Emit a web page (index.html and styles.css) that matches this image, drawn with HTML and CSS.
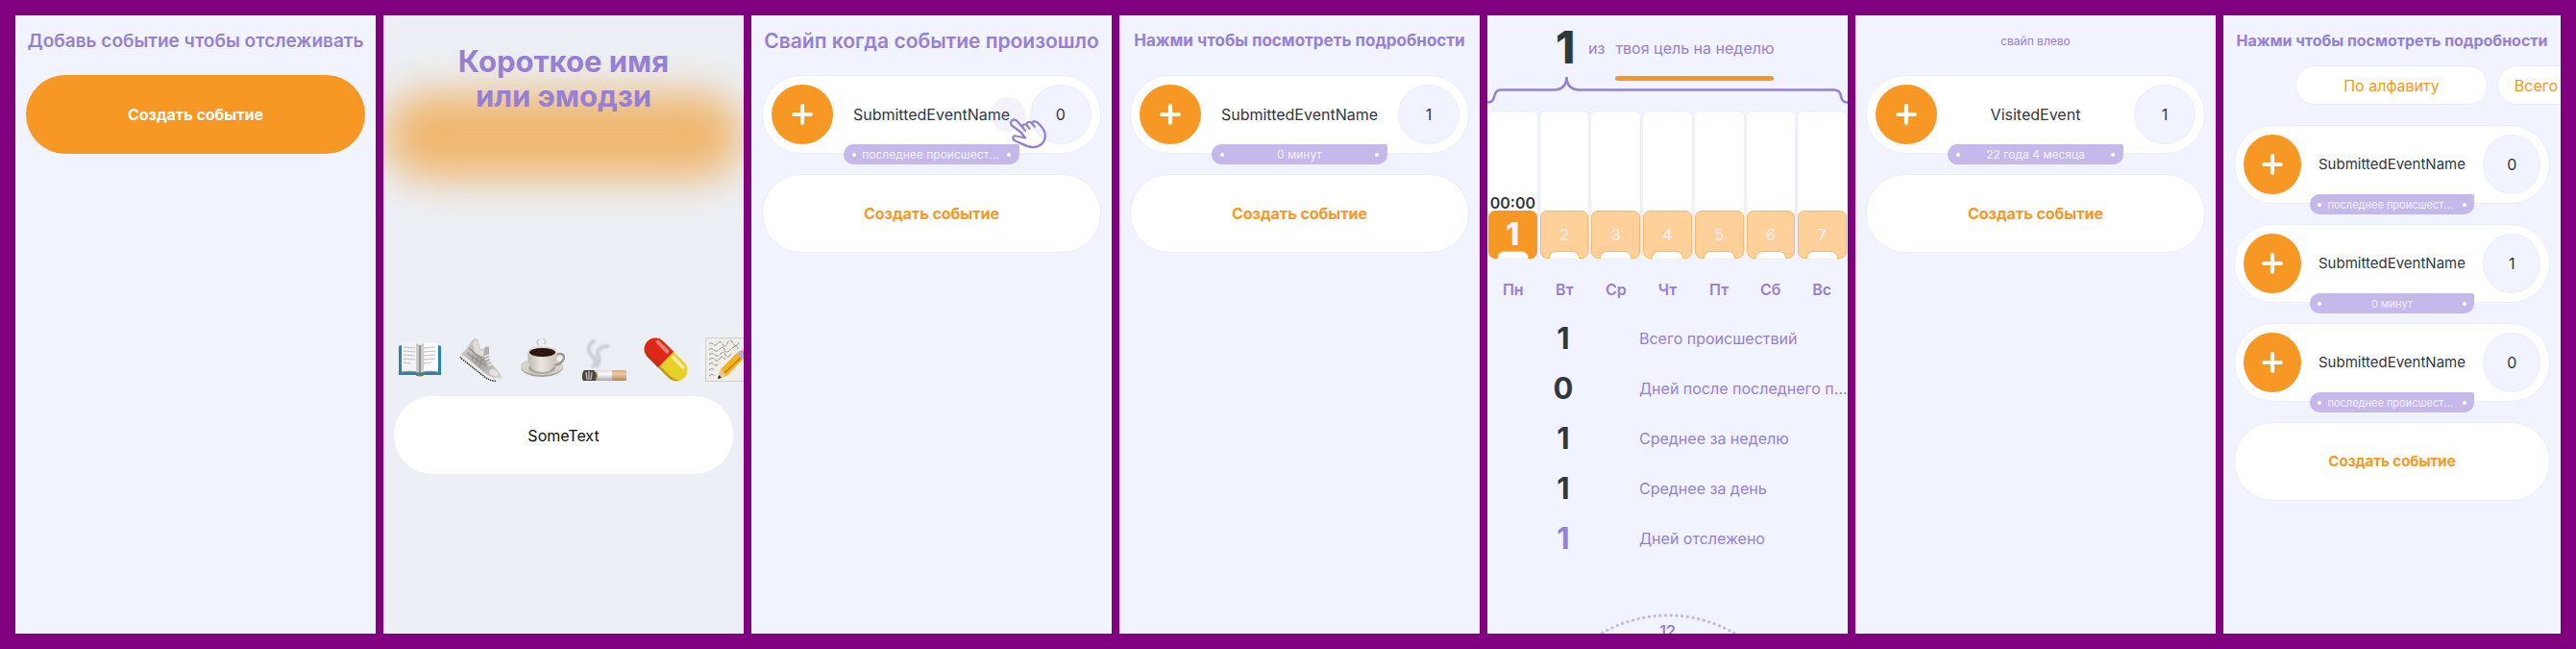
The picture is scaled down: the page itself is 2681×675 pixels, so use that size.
FILE: index.html
```html
<!DOCTYPE html>
<html lang="ru">
<head>
<meta charset="utf-8">
<title>События</title>
<link rel="stylesheet" href="styles.css">
</head>
<body>
<svg class="defs" aria-hidden="true">
  <symbol id="plus" viewBox="0 0 22 22"><path d="M11 2.2V19.8M2.2 11H19.8" fill="none" stroke="#fff" stroke-width="4.2" stroke-linecap="round"/></symbol>
  <linearGradient id="paperRoll" x1="0" y1="0" x2="0" y2="1"><stop offset="0" stop-color="#d8d8dc"/><stop offset=".35" stop-color="#fff"/><stop offset="1" stop-color="#a9a9ad"/></linearGradient>
  <linearGradient id="filterTip" x1="0" y1="0" x2="0" y2="1"><stop offset="0" stop-color="#d9a880"/><stop offset=".35" stop-color="#f0c8a0"/><stop offset="1" stop-color="#b98459"/></linearGradient>
  <linearGradient id="cup" x1="0" y1="0" x2="1" y2="0"><stop offset="0" stop-color="#bdb8ae"/><stop offset=".45" stop-color="#e9e6df"/><stop offset="1" stop-color="#c5c0b6"/></linearGradient>
  <linearGradient id="leather" x1="0" y1="0" x2="1" y2="1"><stop offset="0" stop-color="#d6d4d2"/><stop offset=".55" stop-color="#aaa6a4"/><stop offset="1" stop-color="#dddbd9"/></linearGradient>
  <filter id="smoke"><feGaussianBlur stdDeviation="1.2"/></filter>
</svg>
<main class="board">

  <section class="screen">
    <h2 class="title title-m">Добавь событие чтобы отслеживать</h2>
    <div class="list"><button class="create create-main">Создать событие</button></div>
  </section>

  <section class="screen entry">
    <div class="glow"></div>
    <h2 class="prompt">Короткое имя<br>или эмодзи</h2>
    <div class="emojis">
      <svg class="emoji" viewBox="0 0 46 46" role="img" aria-label="Книга">
        <path d="M1 9l3-1h38l3 1v30H27q-4 3-8 0H1z" fill="#2583ad"/><path d="M18 38h10l-2 2h-6z" fill="#8a7a1c"/>
        <path d="M4 6q12-3 19 2v29q-8-3-19-1z" fill="#f3f3f6"/><path d="M42 6q-12-3-19 2v29q8-3 19-1z" fill="#fafafc"/>
        <path d="M19 6l4 2 4-2v28l-4 3-4-3z" fill="#777" opacity=".35"/><path d="M23 8v29" stroke="#555" stroke-width="1"/>
        <path d="M6 10l12 1M6 14l12 1M6 18l12 1M6 22l12 1M6 26l8 1M27 11l12-1M27 15l12-1M27 19l12-1M27 23l12-1M27 27l8-1" stroke="#b5b5c2" stroke-width="1" stroke-dasharray="3 .6"/>
        <path d="M4 36q12-2 19 1 7-3 19-1" stroke="#8f8f8f" fill="none"/>
      </svg>
      <svg class="emoji" viewBox="0 0 46 46" role="img" aria-label="Кроссовок">
        <path d="M2 17q5-4 8-9 3-6 7-7 3 0 3 4l1 5q3 5 6 0 4-2 4 1v10q1 5 5 9l7 8q3 5-1 7-5 2-12-3L4 22q-3-2-2-5z" fill="url(#leather)"/>
        <path d="M1 17l5 3 22 18q8 6 15 4-2 5-8 3-5-1-9-5L4 23q-4-2-3-6z" fill="#eeedeb"/>
        <path d="M1 20q1 2 4 4l19 15q8 7 14 6" fill="none" stroke="#333" stroke-width="1.500" stroke-dasharray="1.500 .8"/>
        <path d="M14 6q3-5 5-3l2 8q2 4 5 1l-1 8-9-4z" fill="#dfdddb"/><path d="M33 33q5-1 8 6-5 3-10-2z" fill="#e6e4e2"/>
        <path d="M10 11l15 13M8 16l20 14M15 18l-2 6M19 20l-2 7M23 23l-2 7" fill="none" stroke="#908c8a" stroke-width="1.200"/>
        <path d="M26 20l5-2M27 23l5-2M29 26l5-2M30 29l6-2" fill="none" stroke="#f1f0ee" stroke-width="1.400"/>
      </svg>
      <svg class="emoji" viewBox="0 0 46 46" role="img" aria-label="Кофе">
        <ellipse cx="22" cy="31" rx="22" ry="10" fill="#aaa59c"/><ellipse cx="22" cy="30" rx="22" ry="9" fill="#d6d2cb"/><ellipse cx="22" cy="32" rx="14" ry="6" fill="#aca79d"/>
        <path d="M36 18q9-3 9 3-1 7-12 8" fill="none" stroke="#a09b92" stroke-width="2.400"/>
        <path d="M7 15q0 17 9 20 7 2 13 0 9-4 9-20z" fill="url(#cup)"/>
        <ellipse cx="22.500" cy="15" rx="15.500" ry="6" fill="#dedad3"/><ellipse cx="22.500" cy="15.500" rx="13.500" ry="4.600" fill="#2d1710"/>
        <path d="M19 8q-5-4 1-6M24 7q4-3-1-6" fill="none" stroke="#999" stroke-width="1.200" opacity=".55"/>
      </svg>
      <svg class="emoji" viewBox="0 0 46 46" role="img" aria-label="Сигарета">
        <path d="M10 31Q17 26 10 19Q2 10 13 3M14 31Q20 25 16 18Q15 9 28 9" fill="none" stroke="#a9abb0" stroke-width="4" opacity=".5" filter="url(#smoke)"/>
        <rect y="34" width="32" height="11" rx="2" fill="url(#paperRoll)"/><rect x="31" y="34" width="15" height="11" rx="1" fill="url(#filterTip)"/>
        <path d="M2 34h10q6 6 2 11H1q-3-6 1-11z" fill="#4b4540"/><path d="M4 36l1 8M7 35v9M10 36l-1 8" stroke="#bbb5ac" stroke-width="1.500"/>
        <path d="M14 36q3 4 0 8" fill="none" stroke="#b79a66" stroke-width="1.500"/>
      </svg>
      <svg class="emoji" viewBox="0 0 46 46" role="img" aria-label="Таблетка">
        <g transform="rotate(45 23 23)"><rect x="-4" y="11.500" width="54" height="23" rx="11.500" fill="#e7d027"/><path d="M23 11.500H7.500a11.500 11.500 0 0 0 0 23H23z" fill="#dd2819"/>
        <path d="M-2 29q4 3 10 3h30q7-1 10-4-2 6-10 6.500H8q-7-1-10-5.500z" fill="#7c4c0c" opacity=".4"/><rect x="2" y="14" width="18" height="4" rx="2" fill="#fff" opacity=".4"/><rect x="25" y="14" width="18" height="4" rx="2" fill="#fff" opacity=".55"/></g>
      </svg>
      <svg class="emoji" viewBox="0 0 46 46" role="img" aria-label="Заметка">
        <path d="M0 0h46v46H0z" fill="#d0d0ce"/><path d="M1 1h44v44H1z" fill="#eeede9"/>
        <path d="M4 7q2-3 4 0t5-1 5 1 5-1 6 0 6-1M4 13q3-3 5 0t6-1 5 1 7-1 7 0M4 18q3-3 6 0t6-1 5 1 6-1M4 23q3-3 6 0t5-1 6 1M4 28q3-3 5 0t5-1M4 34q3-3 6 0M4 40q3-3 6 0" fill="none" stroke="#777" stroke-width=".8" stroke-dasharray="5 1"/>
        <path d="M13 43l3-10L33 16l6 7-17 17z" fill="#f2b31d"/><path d="M13 43l3-10 6 7z" fill="#e9c79a"/><path d="M13 43l1.300-4 2.500 3z" fill="#222"/><path d="M33 16l3-2 6 7-3 2z" fill="#9db8d8"/><path d="M36 14q4-2 9 2v4l-3 1z" fill="#ef8d98"/><path d="M20 37l17-16" stroke="#c77d10" stroke-width="1.500"/>
      </svg>
    </div>
    <div class="field-wrap"><input class="field" type="text" value="SomeText" aria-label="Короткое имя или эмодзи"></div>
  </section>

  <section class="screen">
    <h2 class="title title-l">Свайп когда событие произошло</h2>
    <div class="list">
      <article class="event">
        <button class="add" aria-label="Добавить"><svg><use href="#plus"/></svg></button>
        <span class="name">SubmittedEventName</span><span class="count">0</span>
        <div class="since"><span>последнее происшествие</span></div>
        <div class="touch"></div>
        <svg class="hand" viewBox="0 0 40 34" aria-hidden="true"><path d="M12.500 16.500L3 9.500C.2 5.800 4.300 1.500 8.300 4.700L15 12.200C13.200 9.300 15.700 7.300 18.700 9.200C17.900 5.800 21.900 4.600 24 7.400C25 4.500 28.800 4.600 31 7.500C33.200 10.600 37.800 13.400 37.800 20C37.800 27.800 31.400 32.500 24 32C17.600 31.500 14.600 28.600 7.200 25.700C2.900 23.700 3.800 19.400 7.600 20.500L17 22.500L12.500 16.500M12 9L17 14.800M18.700 9.200L21.500 12.700M24 7.400L26.800 10.800" fill="none" stroke="#9680d5" stroke-width="2.300" stroke-linejoin="round" stroke-linecap="round"/></svg>
      </article>
      <button class="create">Создать событие</button>
    </div>
  </section>

  <section class="screen">
    <h2 class="title title-s">Нажми чтобы посмотреть подробности</h2>
    <div class="list">
      <article class="event">
        <button class="add" aria-label="Добавить"><svg><use href="#plus"/></svg></button>
        <span class="name">SubmittedEventName</span><span class="count">1</span>
        <div class="since"><span>0 минут</span></div>
      </article>
      <button class="create">Создать событие</button>
    </div>
  </section>

  <section class="screen">
    <div class="goal">
      <strong class="goal-now">1</strong><span class="goal-of">из</span>
      <span class="goal-target">твоя цель на неделю</span>
    </div>
    <svg class="brace" viewBox="0 0 375 30" aria-hidden="true"><path d="M0 27.500C11 27.500 4 14.500 14 14.500H69Q82.500 14 82.500 1Q82.500 14 96 14.500H361C372 14.500 364 27.500 375 27.500" fill="none" stroke="#9680d5" stroke-width="2.600"/></svg>
    <div class="week">
      <div class="day today"><time>00:00</time><b>1</b></div>
      <div class="day"><b>2</b></div><div class="day"><b>3</b></div><div class="day"><b>4</b></div>
      <div class="day"><b>5</b></div><div class="day"><b>6</b></div><div class="day"><b>7</b></div>
    </div>
    <div class="weekdays"><span>Пн</span><span>Вт</span><span>Ср</span><span>Чт</span><span>Пт</span><span>Сб</span><span>Вс</span></div>
    <dl class="stats">
      <div><dd>1</dd><dt>Всего происшествий</dt></div>
      <div><dd>0</dd><dt>Дней после последнего происшествия</dt></div>
      <div><dd>1</dd><dt>Среднее за неделю</dt></div>
      <div><dd>1</dd><dt>Среднее за день</dt></div>
      <div class="tracked"><dd>1</dd><dt>Дней отслежено</dt></div>
    </dl>
    <div class="clock">
      <svg viewBox="0 0 280 280" aria-hidden="true"><circle cx="140" cy="140" r="137" fill="none" stroke="#c5b8ea" stroke-width="3.400" stroke-linecap="round" stroke-dasharray="0 5.740"/></svg>
      <span>12</span>
    </div>
  </section>

  <section class="screen">
    <h2 class="title title-xs">свайп влево</h2>
    <div class="list">
      <article class="event">
        <button class="add" aria-label="Добавить"><svg><use href="#plus"/></svg></button>
        <span class="name">VisitedEvent</span><span class="count">1</span>
        <div class="since"><span>22 года 4 месяца</span></div>
      </article>
      <button class="create">Создать событие</button>
    </div>
  </section>

  <section class="screen narrow">
    <h2 class="title title-s">Нажми чтобы посмотреть подробности</h2>
    <div class="sorts"><button>По алфавиту</button><button>Всего происшествий</button></div>
    <div class="list">
      <article class="event">
        <button class="add" aria-label="Добавить"><svg><use href="#plus"/></svg></button>
        <span class="name">SubmittedEventName</span><span class="count">0</span>
        <div class="since"><span>последнее происшествие</span></div>
      </article>
      <article class="event">
        <button class="add" aria-label="Добавить"><svg><use href="#plus"/></svg></button>
        <span class="name">SubmittedEventName</span><span class="count">1</span>
        <div class="since"><span>0 минут</span></div>
      </article>
      <article class="event">
        <button class="add" aria-label="Добавить"><svg><use href="#plus"/></svg></button>
        <span class="name">SubmittedEventName</span><span class="count">0</span>
        <div class="since"><span>последнее происшествие</span></div>
      </article>
      <button class="create">Создать событие</button>
    </div>
  </section>
</main>
</body>
</html>
```
FILE: styles.css
```css
:root {
  --violet: #9680d5;
  --lilac: #c5b8ea;
  --orange: #f79824;
  --ink: #2f383c;
  --paper: #f1f3ff;
  --line: #ebedfd;
}
* { box-sizing: border-box; }
body {
  margin: 0;
  font: 16px/20px Inter, "Liberation Sans", sans-serif;
  color: var(--ink);
  background: #800080;
}
button, input { font: inherit; color: inherit; border: 0; margin: 0; padding: 0; }
.defs { position: absolute; width: 0; height: 0; }
.board {
  display: grid;
  grid-template-columns: repeat(6, 375fr) 351fr;
  gap: 8px;
  padding: 16px;
  height: 100vh;
}
.screen {
  position: relative;
  display: flex;
  flex-direction: column;
  min-width: 0;
  overflow: hidden;
  background: var(--paper);
}

.title {
  margin: 0;
  padding-top: 8px;
  height: 62px;
  line-height: 37px;
  flex: none;
  text-align: center;
  white-space: nowrap;
  font-weight: 600;
  color: var(--violet);
}
.title-l { font-size: 21px; }
.title-m { font-size: 19px; }
.title-s { font-size: 17px; font-weight: 700; }
.title-xs { font-size: 12px; font-weight: 400; }

.list { display: flex; flex-direction: column; gap: 21px; padding: 0 11px; }
.create, .event { height: 82px; border-radius: 41px; background: #fff; border: 1px solid var(--line); }
.create { color: var(--orange); font-weight: 700; }
.create-main { background: var(--orange); color: #fff; border: 0; }

.event {
  position: relative;
  display: grid;
  grid-template-columns: 64fr 204fr 64fr;
  align-items: center;
  padding: 0 9px;
  text-align: center;
}
.add, .count { height: 62px; border-radius: 50%; display: grid; place-items: center; }
.add { background: var(--orange); }
.add svg { width: 22px; height: 22px; }
.count { background: var(--paper); border: 1px solid var(--line); }
.since {
  position: absolute;
  left: 24%;
  right: 24%;
  bottom: -12px;
  height: 21px;
  display: flex;
  align-items: center;
  gap: 6px;
  padding: 0 9px;
  font-size: 12px;
  color: #f4f1ff;
  background: var(--lilac);
  border-radius: 10px 2px 10px 10px;
}
.since::before, .since::after { content: ""; flex: none; width: 4px; height: 4px; border-radius: 50%; background: #fff; }
.since span { flex: 1; overflow: hidden; white-space: nowrap; text-overflow: ellipsis; }
.touch { position: absolute; left: 237px; top: 22px; width: 36px; height: 36px; border-radius: 50%; background: rgba(150, 128, 213, .1); }
.hand { position: absolute; left: 256px; top: 42px; width: 40px; height: 34px; }

.entry { background: #ecf0f6; }
.glow {
  position: absolute;
  left: 0;
  right: 0;
  top: 80px;
  height: 90px;
  border-radius: 45px;
  background: #efb66e;
  filter: blur(22px);
}
.prompt {
  position: relative;
  margin: 0;
  padding-top: 30px;
  text-align: center;
  font-size: 31px;
  line-height: 36px;
  font-weight: 700;
  color: var(--violet);
}
.emojis { display: flex; gap: 18px; margin-top: auto; padding: 0 15px 15px; }
.emoji { width: 46px; height: 46px; flex: none; }
.field-wrap { padding: 0 11px 166px; }
.field { display: block; width: 100%; height: 81px; border-radius: 41px; background: #fff; text-align: center; color: #111; }

.goal { display: flex; align-items: stretch; height: 70px; padding-left: 71px; color: var(--violet); }
.goal-now { width: 23px; font-size: 46px; line-height: 67px; font-weight: 800; color: var(--ink); }
.goal-of { margin-left: 11px; line-height: 68px; }
.goal-target { position: relative; margin-left: 11px; line-height: 68px; }
.goal-target::after { content: ""; position: absolute; left: 0; right: 0; bottom: 0; height: 5px; border-radius: 3px; background: var(--orange); }
.brace { width: 100%; flex: none; margin-top: -5px; }
.week { display: grid; grid-template-columns: repeat(7, 1fr); gap: 3px; padding: 7px 1px 0; }
.day {
  height: 153px;
  display: flex;
  flex-direction: column;
  justify-content: flex-end;
  background: #fff;
  border-radius: 6px 6px 10px 10px;
  box-shadow: 0 0 0 1px var(--line);
}
.day time { text-align: center; font-size: 16px; line-height: 16px; font-weight: 600; }
.day b {
  position: relative;
  display: grid;
  place-items: center;
  height: 50px;
  border: 1px solid #f8b96c;
  border-radius: 7px;
  background: #ffd099;
  color: var(--paper);
  font-weight: 400;
}
.day b::after {
  content: "";
  position: absolute;
  left: 8px;
  right: 8px;
  bottom: -1px;
  height: 7px;
  background: #fff;
  border: 1px solid #f8b96c;
  border-bottom: 0;
  border-radius: 7px 7px 0 0;
}
.today b { background: var(--orange); border-color: var(--orange); font-size: 32px; font-weight: 800; }
.weekdays { display: grid; grid-template-columns: repeat(7, 1fr); padding-top: 22px; text-align: center; font-weight: 600; color: var(--violet); }
.stats { margin: 0; padding-top: 15px; }
.stats div { display: flex; align-items: center; height: 52px; }
.stats dd { margin: 0; flex: 0 0 158px; text-align: center; font-size: 31px; font-weight: 700; }
.stats dt { min-width: 0; overflow: hidden; white-space: nowrap; text-overflow: ellipsis; color: var(--violet); }
.stats .tracked dd { color: var(--violet); }
.clock { position: relative; align-self: center; margin-top: 51px; width: 280px; height: 280px; flex: none; text-align: center; }
.clock svg { width: 100%; height: 100%; display: block; }
.clock span { position: absolute; left: 0; right: 0; top: 9px; font-weight: 600; color: var(--violet); }

.sorts { display: flex; gap: 10px; margin-top: -10px; padding-left: 75px; }
.sorts button { flex: none; width: 200px; height: 41px; border-radius: 21px; border: 1px solid var(--line); background: #fff; color: var(--orange); }
.narrow .title { font-size: 16px; }
.narrow .list { padding-top: 21px; }
.narrow .name, .narrow .create { font-size: 15px; }
.narrow .since { font-size: 11px; padding: 0 8px; }
```
